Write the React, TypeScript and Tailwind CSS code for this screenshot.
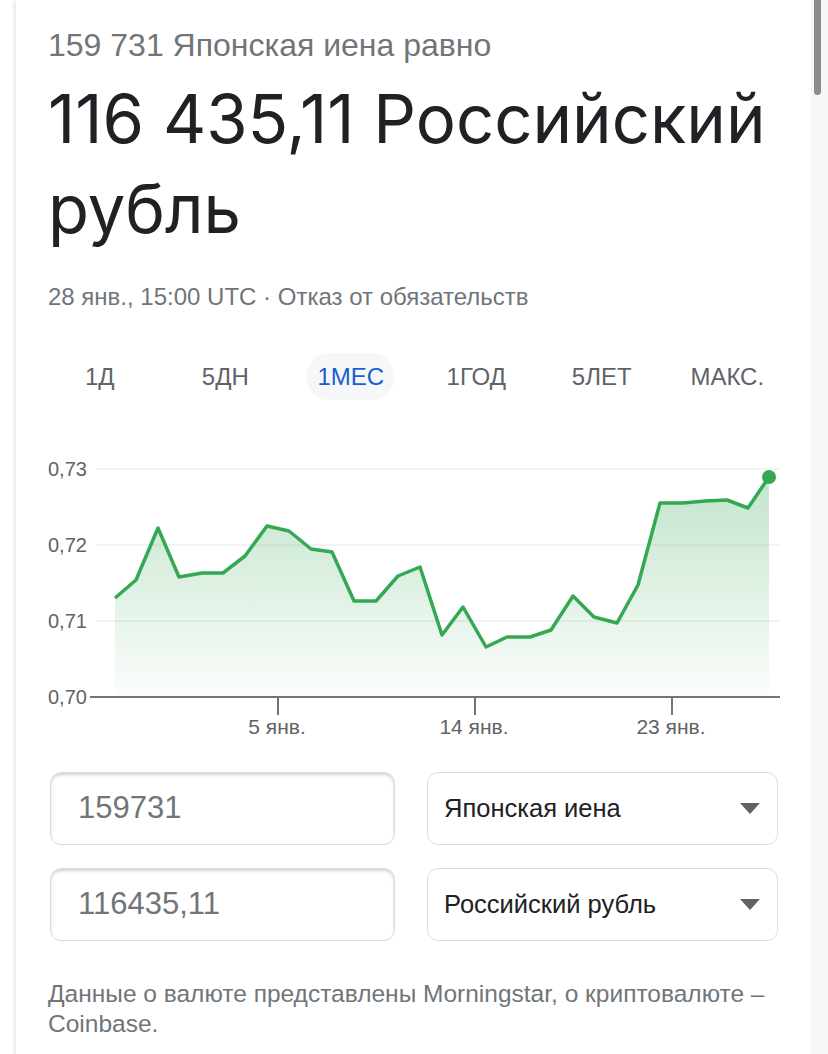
import React from 'react';

const tabs = ['1Д', '5ДН', '1МЕС', '1ГОД', '5ЛЕТ', 'МАКС.'];

// page coordinates of the chart points, read off the screenshot
const points: [number, number][] = [
  [115, 598], [136, 580], [158, 528], [179, 577], [202, 573], [223, 573],
  [245, 556], [267, 526], [289, 531], [311, 549], [332, 552], [354, 601],
  [376, 601], [398, 576], [420, 567], [442, 635], [463, 607], [486, 647],
  [507, 637], [530, 637], [551, 630], [573, 596], [594, 617], [617, 623],
  [638, 585], [660, 503], [683, 503], [705, 501], [727, 500], [748, 508],
  [769, 477],
];

const yLabels = [
  { label: '0,73', y: 469 },
  { label: '0,72', y: 545 },
  { label: '0,71', y: 621 },
  { label: '0,70', y: 697 },
];

const xTicks = [
  { label: '5 янв.', x: 278 },
  { label: '14 янв.', x: 475 },
  { label: '23 янв.', x: 672 },
];

function Chart() {
  const line = points.map(([x, y], i) => `${i === 0 ? 'M' : 'L'}${x} ${y}`).join(' ');
  const area = `${line} L769 697 L115 697 Z`;
  const last = points[points.length - 1];

  return (
    <svg width={795} height={300} viewBox="16 450 795 300" className="block">
      <defs>
        <linearGradient id="fill" x1="0" y1="0" x2="0" y2="1">
          <stop offset="0%" stopColor="#34a853" stopOpacity={0.3} />
          <stop offset="100%" stopColor="#34a853" stopOpacity={0.02} />
        </linearGradient>
      </defs>
      {yLabels.slice(0, 3).map(l => (
        <line key={l.label} x1={96} x2={780} y1={l.y} y2={l.y} stroke="#eeeff1" strokeWidth={1.5} />
      ))}
      <path d={area} fill="url(#fill)" />
      <path d={line} fill="none" stroke="#34a853" strokeWidth={3.5} strokeLinejoin="round" />
      <circle cx={last[0]} cy={last[1]} r={7} fill="#34a853" />
      <line x1={90} x2={780} y1={697} y2={697} stroke="#70757a" strokeWidth={2} />
      {xTicks.map(t => (
        <g key={t.label}>
          <line x1={t.x} x2={t.x} y1={697} y2={715} stroke="#70757a" strokeWidth={2} />
          <text x={t.x - 1} y={734} textAnchor="middle" fontSize={21} fill="#5f6368" fontFamily="'Liberation Sans', Arial, sans-serif">
            {t.label}
          </text>
        </g>
      ))}
      {yLabels.map(l => (
        <text key={l.label} x={48} y={l.y + 7} fontSize={20} fill="#5f6368" fontFamily="'Liberation Sans', Arial, sans-serif">
          {l.label}
        </text>
      ))}
    </svg>
  );
}

function AmountInput({ value }: { value: string }) {
  return (
    <div className="h-[73px] rounded-[11px] border border-[#dadce0] shadow-[inset_0_2px_3px_rgba(0,0,0,0.18)] flex items-center pl-[27px] text-[31px] text-[#70757a]">
      {value}
    </div>
  );
}

function CurrencySelect({ value }: { value: string }) {
  return (
    <div className="h-[73px] rounded-[11px] border border-[#dadce0] flex items-center justify-between pl-[16px] pr-[17px] text-[25.5px] text-[#202124]">
      <span>{value}</span>
      <svg width={20} height={11} viewBox="0 0 20 11">
        <path d="M0 0 L20 0 L10 11 Z" fill="#5f6368" />
      </svg>
    </div>
  );
}

export default function App() {
  const [activeTab, setActiveTab] = React.useState('1МЕС');

  return (
    <div className="flex bg-white font-['Liberation_Sans',Arial,sans-serif] min-h-screen">
      <div className="w-[16px] shrink-0" />
      <div className="w-[795px] shrink-0 bg-white shadow-[0_0_6px_rgba(0,0,0,0.18)] pt-[27px] pb-10">
        <div className="px-[32px]">
          <p className="text-[32px] leading-[36px] text-[#70757a]">159 731 Японская иена равно</p>
          <h1 className="mt-[11px] font-['Inter',sans-serif] text-[67px] leading-[90px] text-[#202124]">
            116 435,11 Российский рубль
          </h1>
          <p className="mt-[29px] text-[24px] leading-[28px] text-[#70757a]">
            28 янв., 15:00 UTC · Отказ от обязательств
          </p>
        </div>

        <div className="mt-[42px] px-[21px] grid grid-cols-6">
          {tabs.map(tab => (
            <div key={tab} className="flex justify-center">
              <button
                onClick={() => setActiveTab(tab)}
                className={
                  tab === activeTab
                    ? 'h-[47px] px-[10px] rounded-[22px] bg-[#f6f7f8] text-[24px] text-[#1a5fd0]'
                    : 'h-[47px] px-[10px] rounded-[22px] text-[24px] text-[#5f6368]'
                }
              >
                {tab}
              </button>
            </div>
          ))}
        </div>

        <div className="mt-[50px]">
          <Chart />
        </div>

        <div className="mt-[22px] pl-[34px] pr-[33px] grid grid-cols-[345px_1fr] gap-x-[32px] gap-y-[23px]">
          <AmountInput value="159731" />
          <CurrencySelect value="Японская иена" />
          <AmountInput value="116435,11" />
          <CurrencySelect value="Российский рубль" />
        </div>

        <p className="mt-[38px] px-[32px] text-[24.5px] leading-[30px] text-[#70757a]">
          Данные о валюте представлены Morningstar, о криптовалюте – Coinbase.
        </p>
      </div>
      <div className="w-[17px] shrink-0 bg-[#f7f7f7] pl-[3px] pt-0">
        <div className="w-[7px] h-[95px] rounded-b-full bg-[#8c8c8c]" />
      </div>
    </div>
  );
}
